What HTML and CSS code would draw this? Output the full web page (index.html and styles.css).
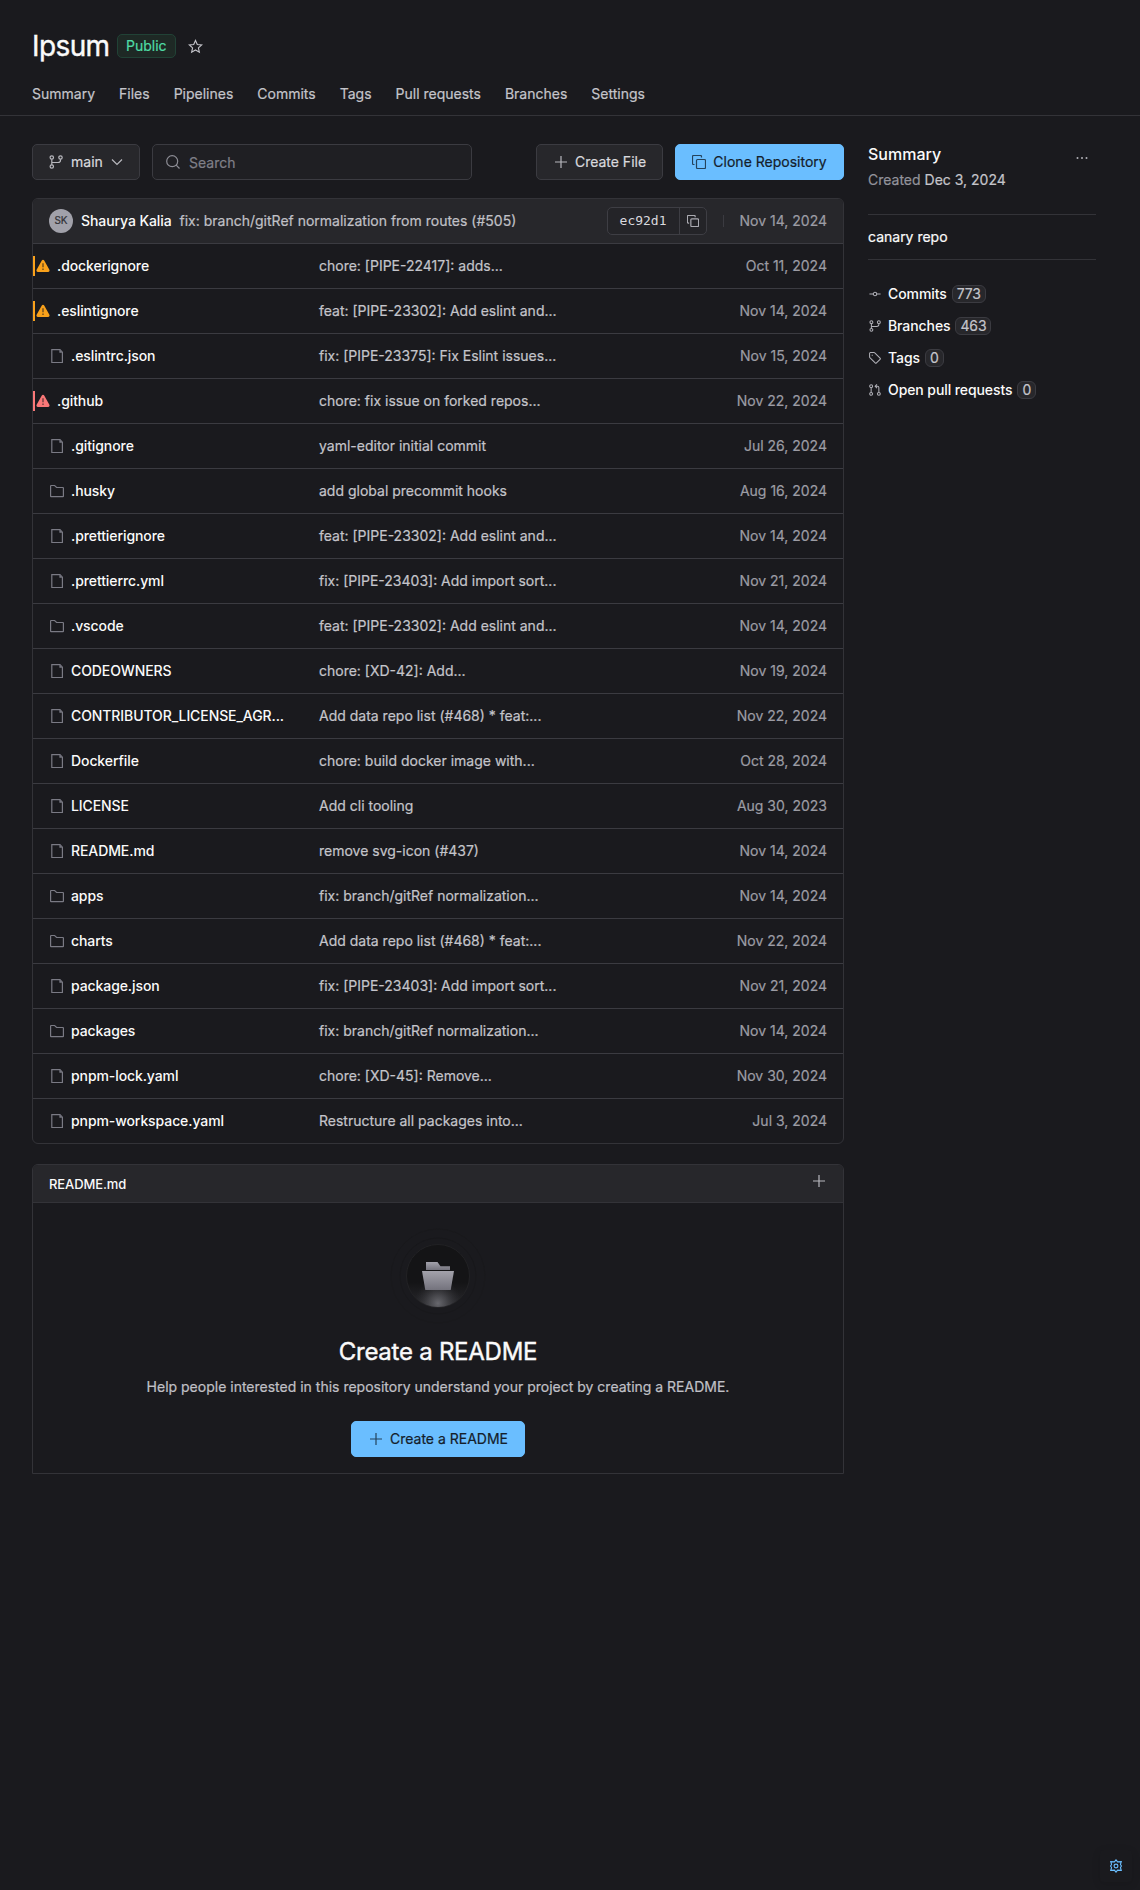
FILE: index.html
```html
<!DOCTYPE html>
<html lang="en">
<head>
<meta charset="utf-8">
<title>Ipsum</title>
<link rel="stylesheet" href="styles.css">
</head>
<body>
<svg class="sprite" aria-hidden="true">
  <symbol id="file" viewBox="0 0 16 16"><path d="M2.800 1.700h8.200L13.400 4.200v10.300H2.800z"/><path d="M10.400 1.700v3h3z" fill="currentColor" stroke="none"/></symbol>
  <symbol id="folder" viewBox="0 0 16 16"><path d="M1.600 13.200V3c0-.3.200-.5.500-.5h3.500l2 2h6.300c.300 0 .500.200.500.500v8.200c0 .3-.2.500-.5.500H2.100c-.3 0-.5-.2-.5-.5z"/></symbol>
  <symbol id="warn" viewBox="0 0 14 14"><path class="solid" d="M5.800 1.400c.5-.9 1.900-.9 2.400 0l5.200 9.400c.5.900-.1 2.200-1.300 2.200H1.900C.7 13 .1 11.700.600 10.800z"/><path class="mark" d="M7 4.300v4M7 9.500v1.500"/></symbol>
  <symbol id="branch" viewBox="0 0 14 14"><circle cx="2.800" cy="2.500" r="1.700"/><circle cx="2.800" cy="11.500" r="1.700"/><circle cx="11.500" cy="2.500" r="1.700"/><path d="M2.800 4.200v5.600M2.800 7.500h6.200c1.500 0 2.500-.8 2.500-2.200V4.200"/></symbol>
  <symbol id="copy" viewBox="0 0 14 14"><rect x="4.500" y="4.500" width="9" height="9" rx="1"/><path d="M2.500 9.500h-1c-.6 0-1-.4-1-1v-7c0-.6.4-1 1-1h7c.6 0 1 .4 1 1v1"/></symbol>
  <symbol id="plus" viewBox="0 0 16 16"><path d="M8 2v12M2 8h12"/></symbol>
</svg>

<header class="top">
  <div class="title-row">
    <h1>Ipsum</h1>
    <span class="public">Public</span>
    <svg class="icon star" viewBox="0 0 16 16"><path d="M8 1.500l1.900 4.300 4.700.5-3.500 3.200 1 4.600L8 11.700l-4.100 2.400 1-4.600L1.400 6.300l4.700-.5z"/></svg>
  </div>
  <nav class="tabs">
    <a>Summary</a><a>Files</a><a>Pipelines</a><a>Commits</a><a>Tags</a><a>Pull requests</a><a>Branches</a><a>Settings</a>
  </nav>
</header>

<div class="page">
  <main class="main">
    <div class="toolbar">
      <button class="btn branch-btn"><svg class="icon"><use href="#branch"/></svg>main<svg class="icon chevron" viewBox="0 0 12 12"><path d="M1 3.500l5 5 5-5"/></svg></button>
      <div class="search"><svg class="icon" viewBox="0 0 14 14"><circle cx="6.200" cy="6.200" r="5.500"/><path d="M10.200 10.200l3.300 3.300"/></svg><span>Search</span></div>
      <button class="btn create-btn"><svg class="icon"><use href="#plus"/></svg>Create File</button>
      <button class="btn primary clone-btn"><svg class="icon"><use href="#copy"/></svg>Clone Repository</button>
    </div>

    <section class="files">
      <div class="latest">
        <span class="avatar">SK</span>
        <span class="author">Shaurya Kalia</span>
        <span class="commit-msg">fix: branch/gitRef normalization from routes (#505)</span>
        <span class="hash"><code>ec92d1</code><span class="copy"><svg class="icon"><use href="#copy"/></svg></span></span>
        <span class="sep"></span>
        <span class="date">Nov 14, 2024</span>
      </div>
      <div class="row flag amber"><span class="name"><svg class="icon"><use href="#warn"/></svg>.dockerignore</span><span class="msg">chore: [PIPE-22417]: adds...</span><span class="date">Oct 11, 2024</span></div>
      <div class="row flag amber"><span class="name"><svg class="icon"><use href="#warn"/></svg>.eslintignore</span><span class="msg">feat: [PIPE-23302]: Add eslint and...</span><span class="date">Nov 14, 2024</span></div>
      <div class="row"><span class="name"><svg class="icon"><use href="#file"/></svg>.eslintrc.json</span><span class="msg">fix: [PIPE-23375]: Fix Eslint issues...</span><span class="date">Nov 15, 2024</span></div>
      <div class="row flag red"><span class="name"><svg class="icon"><use href="#warn"/></svg>.github</span><span class="msg">chore: fix issue on forked repos...</span><span class="date">Nov 22, 2024</span></div>
      <div class="row"><span class="name"><svg class="icon"><use href="#file"/></svg>.gitignore</span><span class="msg">yaml-editor initial commit</span><span class="date">Jul 26, 2024</span></div>
      <div class="row"><span class="name"><svg class="icon"><use href="#folder"/></svg>.husky</span><span class="msg">add global precommit hooks</span><span class="date">Aug 16, 2024</span></div>
      <div class="row"><span class="name"><svg class="icon"><use href="#file"/></svg>.prettierignore</span><span class="msg">feat: [PIPE-23302]: Add eslint and...</span><span class="date">Nov 14, 2024</span></div>
      <div class="row"><span class="name"><svg class="icon"><use href="#file"/></svg>.prettierrc.yml</span><span class="msg">fix: [PIPE-23403]: Add import sort...</span><span class="date">Nov 21, 2024</span></div>
      <div class="row"><span class="name"><svg class="icon"><use href="#folder"/></svg>.vscode</span><span class="msg">feat: [PIPE-23302]: Add eslint and...</span><span class="date">Nov 14, 2024</span></div>
      <div class="row"><span class="name"><svg class="icon"><use href="#file"/></svg>CODEOWNERS</span><span class="msg">chore: [XD-42]: Add...</span><span class="date">Nov 19, 2024</span></div>
      <div class="row"><span class="name"><svg class="icon"><use href="#file"/></svg>CONTRIBUTOR_LICENSE_AGR...</span><span class="msg">Add data repo list (#468) * feat:...</span><span class="date">Nov 22, 2024</span></div>
      <div class="row"><span class="name"><svg class="icon"><use href="#file"/></svg>Dockerfile</span><span class="msg">chore: build docker image with...</span><span class="date">Oct 28, 2024</span></div>
      <div class="row"><span class="name"><svg class="icon"><use href="#file"/></svg>LICENSE</span><span class="msg">Add cli tooling</span><span class="date">Aug 30, 2023</span></div>
      <div class="row"><span class="name"><svg class="icon"><use href="#file"/></svg>README.md</span><span class="msg">remove svg-icon (#437)</span><span class="date">Nov 14, 2024</span></div>
      <div class="row"><span class="name"><svg class="icon"><use href="#folder"/></svg>apps</span><span class="msg">fix: branch/gitRef normalization...</span><span class="date">Nov 14, 2024</span></div>
      <div class="row"><span class="name"><svg class="icon"><use href="#folder"/></svg>charts</span><span class="msg">Add data repo list (#468) * feat:...</span><span class="date">Nov 22, 2024</span></div>
      <div class="row"><span class="name"><svg class="icon"><use href="#file"/></svg>package.json</span><span class="msg">fix: [PIPE-23403]: Add import sort...</span><span class="date">Nov 21, 2024</span></div>
      <div class="row"><span class="name"><svg class="icon"><use href="#folder"/></svg>packages</span><span class="msg">fix: branch/gitRef normalization...</span><span class="date">Nov 14, 2024</span></div>
      <div class="row"><span class="name"><svg class="icon"><use href="#file"/></svg>pnpm-lock.yaml</span><span class="msg">chore: [XD-45]: Remove...</span><span class="date">Nov 30, 2024</span></div>
      <div class="row"><span class="name"><svg class="icon"><use href="#file"/></svg>pnpm-workspace.yaml</span><span class="msg">Restructure all packages into...</span><span class="date">Jul 3, 2024</span></div>
    </section>

    <section class="readme">
      <div class="readme-head"><span>README.md</span><svg class="icon"><use href="#plus"/></svg></div>
      <div class="empty">
        <svg class="art" viewBox="0 0 104 64">
          <defs>
            <linearGradient id="metal" x1="0" y1="0" x2="0" y2="1"><stop offset="0" stop-color="#a3a2ab"/><stop offset="1" stop-color="#74737d"/></linearGradient>
            <linearGradient id="disc" x1="0" y1="0" x2="0" y2="1"><stop offset="0" stop-color="#141416"/><stop offset=".6" stop-color="#141416"/><stop offset="1" stop-color="#2a2a2e"/></linearGradient>
            <radialGradient id="glow" cx=".5" cy=".94" r=".38"><stop offset="0" stop-color="#68686e"/><stop offset=".35" stop-color="#505055" stop-opacity=".8"/><stop offset="1" stop-color="#303034" stop-opacity="0"/></radialGradient>
          </defs>
          <circle cx="52" cy="32" r="47" fill="none" stroke="#19191c"/>
          <circle cx="52" cy="32" r="38" fill="none" stroke="#18181b"/>
          <circle cx="52" cy="32" r="31.500" fill="url(#disc)" stroke="#242427" stroke-width=".8"/>
          <circle cx="52" cy="32" r="31" fill="url(#glow)"/>
          <path fill="url(#metal)" d="M40 18h11.500l3 4.200H64V26H40z"/>
          <path fill="url(#metal)" d="M36 27h32l-3.300 19H39.300z"/>
        </svg>
        <h2>Create a README</h2>
        <p>Help people interested in this repository understand your project by creating a README.</p>
        <button class="btn primary readme-btn"><svg class="icon"><use href="#plus"/></svg>Create a README</button>
      </div>
    </section>
  </main>

  <aside class="side">
    <div class="side-head"><h3>Summary</h3><svg class="dots" viewBox="0 0 12 12"><circle cx="1.500" cy="6" r="1"/><circle cx="6" cy="6" r="1"/><circle cx="10.500" cy="6" r="1"/></svg></div>
    <div class="created">Created <b>Dec 3, 2024</b></div>
    <div class="desc">canary repo</div>
    <ul class="stats">
      <li><svg class="icon" viewBox="0 0 14 14"><circle cx="7" cy="7" r="2"/><path d="M.5 7H5M9 7h4.500"/></svg>Commits<span class="count">773</span></li>
      <li><svg class="icon"><use href="#branch"/></svg>Branches<span class="count">463</span></li>
      <li><svg class="icon" viewBox="0 0 14 14"><path d="M.7 1.500v4.300c0 .3.100.6.300.8l6.200 6.200c.4.400 1.100.4 1.500 0l4.200-4.200c.4-.4.4-1.100 0-1.500L6.700.9c-.2-.2-.5-.3-.8-.3H1.600c-.5 0-.9.4-.9.9z"/><path d="M3.800 3.300v1.200"/></svg>Tags<span class="count">0</span></li>
      <li><svg class="icon" viewBox="0 0 14 14"><circle cx="2.500" cy="2.500" r="1.700"/><circle cx="2.500" cy="11.500" r="1.700"/><circle cx="11.500" cy="11.500" r="1.700"/><path d="M2.500 4.200v5.600M11.500 9.800V4.200c0-1-.6-1.600-1.600-1.600H7.500M9.300.5L7.200 2.600l2.100 2.100"/></svg>Open pull requests<span class="count">0</span></li>
    </ul>
  </aside>
</div>

<button class="theme"><svg class="icon" viewBox="0 0 16 16"><path d="M8 1l1.800 2.300 4.200-.2-.9 3.100L14.200 8l-1.100 1.800.9 3.100-4.200-.2L8 15l-1.800-2.300-4.200.2.900-3.100L1.800 8l1.100-1.800L2 3.100l4.200.2z"/><circle cx="8" cy="8" r="2.200"/></svg></button>
</body>
</html>
```
FILE: styles.css
```css
* { box-sizing: border-box; }

body {
  margin: 0;
  min-height: 1890px;
  background: #1a1a1e;
  color: #fafafa;
  font: 400 14px/20px Inter, "Liberation Sans", sans-serif;
  -webkit-text-stroke: .2px;
}

h1, h2, h3, p, ul { margin: 0; padding: 0; }
h1, h2 { font-weight: 400; -webkit-text-stroke: .4px; }
h3 { font-weight: 500; -webkit-text-stroke: 0; }
.sprite { position: absolute; width: 0; height: 0; }

.icon {
  width: 16px;
  height: 16px;
  flex: none;
  fill: none;
  stroke: currentColor;
  stroke-width: 1.2;
}

.top {
  height: 116px;
  padding: 30px 32px 0;
  border-bottom: 1px solid #333338;
}
.title-row { display: flex; align-items: center; height: 32px; }
h1 { width: 76px; font-size: 28px; line-height: 32px; letter-spacing: -.6px; white-space: nowrap; }
.public {
  height: 24px;
  margin-left: 9px;
  padding: 0 8px;
  border: 1px solid #214236;
  border-radius: 5px;
  background: #1e2925;
  color: #4fdca5;
  line-height: 22px;
}
.star { width: 15px; height: 15px; margin-left: 12px; color: #c4c4ca; }
.tabs { display: flex; gap: 24px; margin-top: 22px; color: #c4c4ca; }

.page { display: flex; gap: 24px; padding: 28px 44px 0 32px; }
.main { width: 812px; flex: none; }

.btn {
  display: flex;
  align-items: center;
  justify-content: center;
  gap: 6px;
  height: 36px;
  padding: 0;
  border: 1px solid #3b3b41;
  border-radius: 5px;
  background: #27272b;
  color: #d9d9de;
  font: inherit;
}
.btn .icon { color: #b8b8be; }
.primary { border-color: #6abeff; background: #6abeff; color: #14202b; }
.primary .icon { color: #24435c; }
.toolbar { display: flex; }
.branch-btn { width: 108px; gap: 8px; }
.branch-btn .icon, .clone-btn .icon, .search .icon { width: 14px; height: 14px; }
.clone-btn { gap: 7px; }
.branch-btn .chevron { width: 12px; height: 12px; }
.search {
  display: flex;
  align-items: center;
  gap: 8px;
  width: 320px;
  margin: 0 64px 0 12px;
  padding-left: 13px;
  border: 1px solid #3b3b41;
  border-radius: 5px;
  background: #1f1f23;
  color: #7f7f88;
}
.search .icon { color: #8d8d95; }
.search span { padding: 2px 0 0 1px; }
.create-btn { width: 127px; margin-right: 12px; }
.clone-btn { width: 169px; }

.files { margin-top: 18px; border: 1px solid #333338; border-radius: 6px; overflow: hidden; }
.latest {
  display: flex;
  align-items: center;
  height: 44px;
  padding: 0 16px;
  background: #27272b;
}
.avatar {
  width: 24px;
  height: 24px;
  border-radius: 50%;
  background: #a1a1aa;
  color: #323237;
  font-size: 10px;
  line-height: 23px;
  text-align: center;
}
.author { margin-left: 8px; font-weight: 500; letter-spacing: -.09px; -webkit-text-stroke: 0; }
.commit-msg { flex: 1; margin-left: 8px; color: #c0c0c6; }
.hash {
  display: flex;
  width: 100px;
  height: 28px;
  border: 1px solid #3e3e44;
  border-radius: 5px;
  background: #242428;
}
.hash code {
  width: 72px;
  border-right: 1px solid #3e3e44;
  color: #d9d9de;
  font: 13px/25px "DejaVu Sans Mono", monospace;
  text-align: center;
  -webkit-text-stroke: 0;
}
.copy { display: grid; flex: 1; place-items: center; color: #aaaab1; }
.copy .icon { width: 12px; height: 12px; stroke-width: 1.4; }
.sep { width: 1px; height: 12px; margin: 0 16px; background: #3b3b41; }
.date { color: #9c9ca4; text-align: right; }

.row {
  display: grid;
  grid-template-columns: 270px 1fr auto;
  align-items: center;
  height: 45px;
  padding: 0 16px;
  border-top: 1px solid #3b3b41;
}
.name {
  display: flex;
  align-items: center;
  gap: 6px;
  font-weight: 500;
  letter-spacing: -.09px;
  white-space: nowrap;
  -webkit-text-stroke: 0;
}
.name .icon { color: #7a7a84; }
.row .msg { color: #c4c4ca; }
.flag .name { gap: 7px; height: 20px; margin-left: -16px; padding-left: 1px; border-left: 2px solid; }
.flag .icon { width: 14px; height: 14px; }
.solid { fill: currentColor; stroke: none; }
.mark { stroke: #1a1a1e; stroke-opacity: .6; stroke-width: 1.5; }
.amber .name { border-color: #f9a11b; }
.amber .icon { color: #f9a11b; }
.red .name { border-color: #fa7878; }
.red .icon { color: #fa7878; }

.readme { height: 310px; margin-top: 20px; border: 1px solid #333338; border-radius: 6px 6px 0 0; overflow: hidden; }
.readme-head {
  display: flex;
  justify-content: space-between;
  height: 38px;
  padding: 8px 16px 0;
  border-bottom: 1px solid #333338;
  background: #27272b;
  font-weight: 500;
}
.readme-head span { padding-top: 1px; font-size: 13px; letter-spacing: -.1px; -webkit-text-stroke: 0; }
.readme-head .icon { color: #b8b8be; }
.empty { display: flex; flex-direction: column; align-items: center; padding-top: 41px; }
.art { width: 104px; height: 64px; overflow: visible; }
h2 { margin-top: 28px; font-size: 24px; line-height: 32px; letter-spacing: -.25px; }
.empty p { margin-top: 9px; color: #c0c0c6; }
.readme-btn { width: 174px; margin-top: 24px; }

.side { flex: 1; }
.side-head { display: flex; justify-content: space-between; }
h3 { font-size: 16px; line-height: 20px; }
.dots { width: 12px; height: 12px; margin: 8px 8px 0 0; fill: #b0b0b7; }
.created { padding: 6px 0 24px; border-bottom: 1px solid #333338; color: #93939b; }
.created b { color: #c4c4ca; font-weight: 400; }
.desc { padding: 12px 0; border-bottom: 1px solid #333338; }
.stats { display: grid; gap: 12px; margin-top: 24px; list-style: none; }
.stats li { display: flex; align-items: center; height: 20px; font-weight: 500; letter-spacing: -.09px; -webkit-text-stroke: 0; }
.stats .icon { width: 12px; height: 12px; margin: 0 7px 0 1px; color: #b0b0b7; }
.count {
  height: 18px;
  margin-left: 5px;
  padding: 0 4px;
  border: 1px solid #3b3b41;
  border-radius: 6px;
  background: #27272b;
  color: #c4c4ca;
  font-weight: 400;
  letter-spacing: -.15px;
  line-height: 16px;
  -webkit-text-stroke: .2px;
}

.theme {
  position: fixed;
  right: 8px;
  bottom: 8px;
  display: grid;
  place-items: center;
  width: 32px;
  height: 32px;
  padding: 0;
  border: 0;
  border-radius: 4px;
  background: #1a1a1e;
  box-shadow: 0 2px 8px rgba(0, 0, 0, .12);
  color: #6abeff;
}
.theme .icon { width: 14px; height: 14px; stroke-width: 1.3; }
```
